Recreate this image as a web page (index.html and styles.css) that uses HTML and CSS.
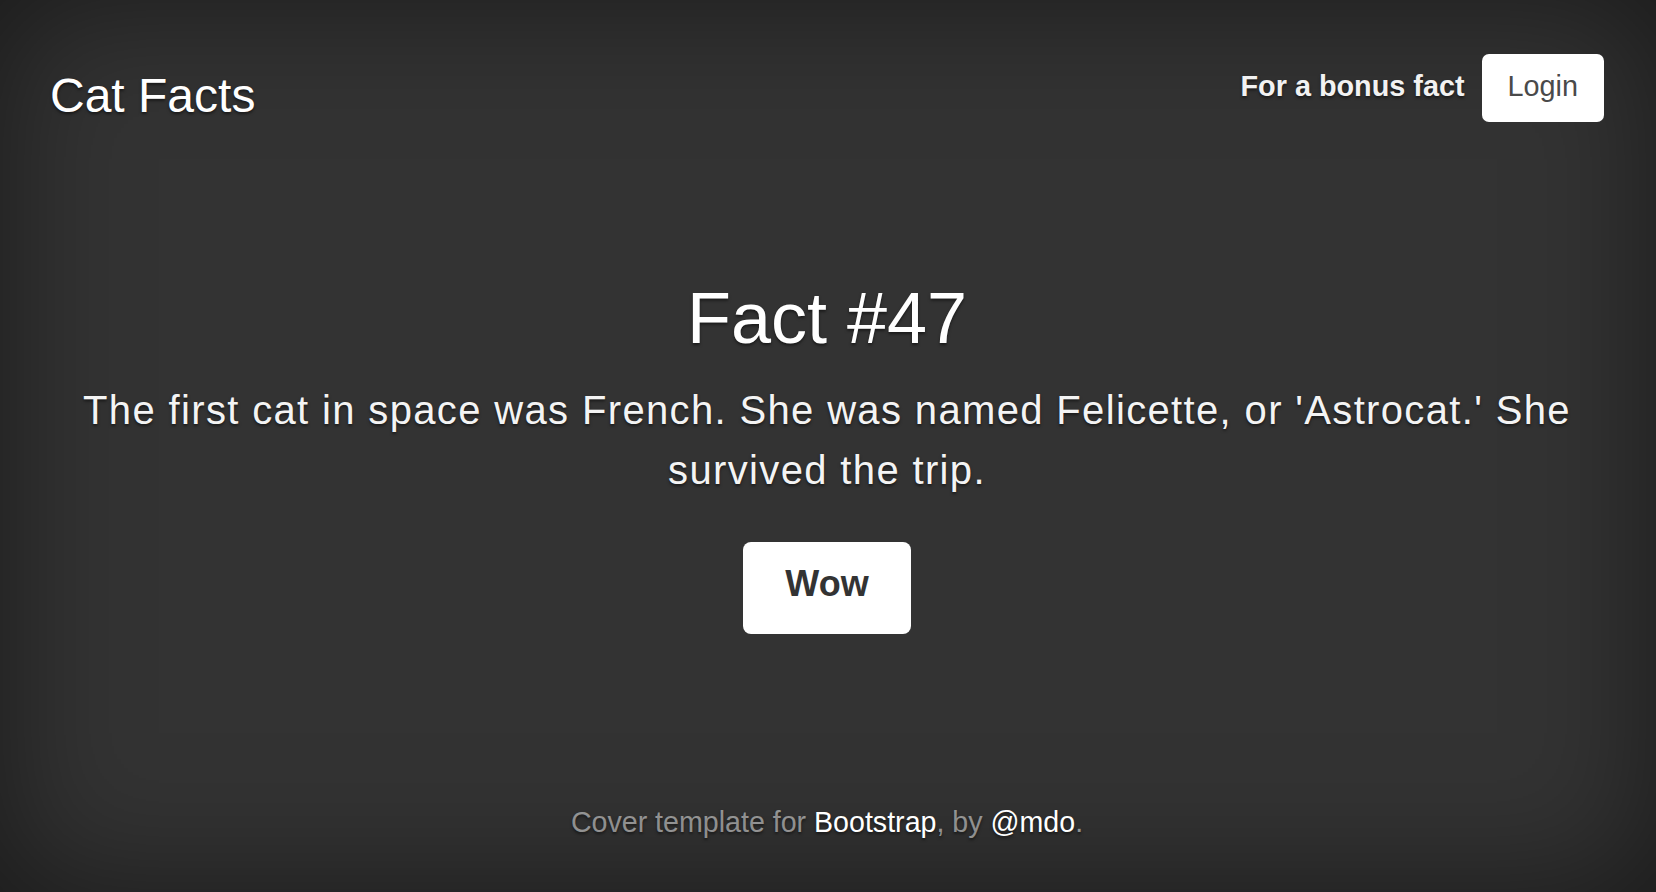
FILE: index.html
```html
<!DOCTYPE html>
<html lang="en">
<head>
<meta charset="utf-8">
<title>Cat Facts</title>
<link rel="stylesheet" href="styles.css">
</head>
<body>
<div class="cover">
  <header class="masthead">
    <h3 class="brand">Cat Facts</h3>
    <nav class="nav">
      <a class="nav-link" href="#">For a bonus fact</a>
      <a class="btn-login" href="#">Login</a>
    </nav>
  </header>
  <main class="inner">
    <h1 class="heading">Fact #47</h1>
    <p class="lead">The first cat in space was French. She was named Felicette, or 'Astrocat.' She survived the trip.</p>
    <div class="actions">
      <a class="btn-wow" href="#">Wow</a>
    </div>
  </main>
  <footer class="mastfoot">
    <p>Cover template for <a href="#">Bootstrap</a>, by <a href="#">@mdo</a>.</p>
  </footer>
</div>
</body>
</html>
```
FILE: styles.css
```css
html, body {
  margin: 0;
  padding: 0;
  height: 100%;
}
body {
  background: #333;
  color: #fff;
  font-family: "Liberation Sans", Arial, sans-serif;
  box-shadow: inset 0 0 133px rgba(0, 0, 0, 0.5);
  text-shadow: 0 1.5px 3px rgba(0, 0, 0, 0.5);
}
.cover {
  box-sizing: border-box;
  height: 100vh;
  display: flex;
  flex-direction: column;
  padding: 54px 52px 48px 50px;
}
.masthead {
  display: flex;
  justify-content: space-between;
  align-items: flex-start;
}
.brand {
  margin: 13px 0 0 0;
  font-size: 48px;
  line-height: 1.2;
  font-weight: 400;
}
.nav {
  display: flex;
  align-items: baseline;
  gap: 17px;
}
.nav-link {
  color: #f2f2f2;
  font-size: 28.8px;
  line-height: 1.5;
  font-weight: 700;
  text-decoration: none;
}
.btn-login {
  display: block;
  background: #fff;
  color: #4a4a4a;
  text-shadow: none;
  font-size: 28.8px;
  line-height: 1.5;
  padding: 11px 26px 14px;
  border-radius: 7px;
  text-decoration: none;
}
.inner {
  margin-top: 150px;
  text-align: center;
}
.heading {
  margin: 0 0 19px 0;
  font-size: 72px;
  line-height: 1.2;
  font-weight: 400;
}
.lead {
  margin: 0;
  font-size: 40px;
  line-height: 60px;
  letter-spacing: 1.35px;
  color: #f4f4f4;
}
.actions {
  display: flex;
  justify-content: center;
  margin-top: 42px;
}
.btn-wow {
  display: block;
  background: #fff;
  color: #333;
  text-shadow: none;
  font-size: 36px;
  line-height: 54px;
  font-weight: 700;
  padding: 15px 42px 23px;
  border-radius: 8px;
  text-decoration: none;
}
.mastfoot {
  margin-top: auto;
  text-align: center;
  color: rgba(255, 255, 255, 0.5);
  font-size: 28.6px;
  line-height: 1.5;
}
.mastfoot p {
  margin: 0;
}
.mastfoot a {
  color: #fff;
  text-decoration: none;
}
```
